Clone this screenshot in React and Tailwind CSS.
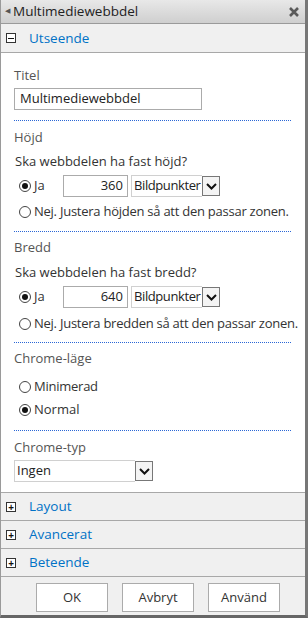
import React from 'react';

const Dotted = () => <div className="h-0 border-t border-dotted border-[#2b67d6]" />;

const Radio = ({ checked }) => (
    <span className="w-[12px] h-[12px] rounded-full border border-[#444] bg-white flex items-center justify-center shrink-0">
        {checked && <span className="w-[6px] h-[6px] rounded-full bg-[#111]" />}
    </span>
);

const Chevron = () => (
    <span className="w-[18px] h-[20px] border border-[#777] bg-[#f4f4f4] flex items-center justify-center shrink-0">
        <svg width="11" height="7" viewBox="0 0 11 7">
            <path d="M1 1 L5.5 5.5 L10 1" fill="none" stroke="#111" strokeWidth="2" />
        </svg>
    </span>
);

const SizeRow = ({ value }) => (
    <div className="flex items-center h-[22px] ml-[5px]">
        <Radio checked />
        <span className="ml-[3px] w-[29px] text-[#333]">Ja</span>
        <div className="w-[65px] h-[22px] border border-[#ababab] flex items-center justify-end pr-[4px] text-[#222]">{value}</div>
        <div className="ml-[3px] flex items-center h-[22px]">
            <div className="w-[71px] h-[22px] border border-[#d0d0d0] border-r-0 flex items-center pl-[2px] text-[#222] whitespace-nowrap tracking-[-0.4px]">Bildpunkter</div>
            <Chevron />
        </div>
    </div>
);

const NoRow = ({ text }) => (
    <div className="flex items-center h-[18px] ml-[5px]">
        <Radio />
        <span className="ml-[3px] text-[#333] whitespace-nowrap tracking-[-0.25px]">{text}</span>
    </div>
);

const Collapsed = ({ title }) => (
    <div className="h-[28px] bg-[#f0f0f0] border-b border-[#a8a8a8] flex items-center">
        <span className="ml-[5px] w-[10px] h-[10px] border border-[#333] bg-white flex items-center justify-center text-[10px] leading-none font-bold text-[#111]">+</span>
        <span className="ml-[13px] text-[#0072c6] text-[13.5px]">{title}</span>
    </div>
);

export default function App() {
    return (
        <div className="w-[308px] h-[618px] bg-white flex flex-col border-l border-[#9a9a9a] border-r-[3px] border-r-[#777] border-b-[3px] border-b-[#666] text-[13px]" style={{ fontFamily: '"Open Sans", "Noto Sans", sans-serif' }}>
            {/* title bar */}
            <div className="h-[24px] shrink-0 bg-gradient-to-b from-[#e8e8e8] to-[#cfcfcf] border-b border-[#9a9a9a] flex items-center">
                <span className="ml-[4px] text-[7px] text-[#555]">◀</span>
                <span className="ml-[3px] text-[13.5px] text-[#222]">Multimediewebbdel</span>
                <svg className="ml-auto mr-[6px]" width="10" height="10" viewBox="0 0 10 10">
                    <path d="M1 1 L9 9 M9 1 L1 9" stroke="#5a5a5a" strokeWidth="2.6" />
                </svg>
            </div>

            {/* Utseende header */}
            <div className="h-[29px] shrink-0 bg-[#f0f0f0] border-b border-[#a8a8a8] flex items-center">
                <span className="ml-[5px] w-[10px] h-[10px] border border-[#333] bg-white flex items-center justify-center">
                    <span className="w-[6px] h-[1px] bg-[#111]" />
                </span>
                <span className="ml-[13px] text-[#0072c6] text-[13.5px]">Utseende</span>
            </div>

            {/* content */}
            <div className="flex-1 flex flex-col pl-[13px] pr-[14px] border-b border-[#a8a8a8]">
                <div className="mt-[13px] h-[18px] leading-[18px] text-[#555]">Titel</div>
                <div className="mt-[4px] w-[188px] h-[22px] border border-[#ababab] flex items-center pl-[5px] text-[#222]">Multimediewebbdel</div>
                <div className="mt-[10px]"><Dotted /></div>

                <div className="mt-[7px] h-[18px] leading-[18px] text-[#555]">Höjd</div>
                <div className="mt-[6px] h-[18px] leading-[18px] ml-[1px] text-[#333]">Ska webbdelen ha fast höjd?</div>
                <div className="mt-[5px]"><SizeRow value="360" /></div>
                <div className="mt-[6px]"><NoRow text="Nej. Justera höjden så att den passar zonen." /></div>
                <div className="mt-[10px]"><Dotted /></div>

                <div className="mt-[6px] h-[18px] leading-[18px] text-[#555]">Bredd</div>
                <div className="mt-[7px] h-[18px] leading-[18px] ml-[1px] text-[#333]">Ska webbdelen ha fast bredd?</div>
                <div className="mt-[5px]"><SizeRow value="640" /></div>
                <div className="mt-[7px]"><NoRow text="Nej. Justera bredden så att den passar zonen." /></div>
                <div className="mt-[9px]"><Dotted /></div>

                <div className="mt-[6px] h-[18px] leading-[18px] text-[#555]">Chrome-läge</div>
                <div className="mt-[11px]"><NoRow text="Minimerad" /></div>
                <div className="mt-[5px] flex items-center h-[18px] ml-[5px]">
                    <Radio checked />
                    <span className="ml-[3px] text-[#333]">Normal</span>
                </div>
                <div className="mt-[11px]"><Dotted /></div>

                <div className="mt-[7px] h-[18px] leading-[18px] text-[#555]">Chrome-typ</div>
                <div className="mt-[4px] flex items-center h-[22px]">
                    <div className="w-[121px] h-[22px] border border-[#d0d0d0] border-r-0 flex items-center pl-[2px] text-[#222]">Ingen</div>
                    <Chevron />
                </div>
            </div>

            <Collapsed title="Layout" />
            <Collapsed title="Avancerat" />
            <Collapsed title="Beteende" />

            {/* footer */}
            <div className="h-[38px] shrink-0 bg-[#f0f0f0] flex items-start justify-end gap-[14px] pr-[25px] pt-[6px]">
                {['OK', 'Avbryt', 'Använd'].map(b => (
                    <div key={b} className="w-[72px] h-[29px] bg-white border border-[#ababab] flex items-center justify-center text-[#333]">{b}</div>
                ))}
            </div>
        </div>
    );
}
